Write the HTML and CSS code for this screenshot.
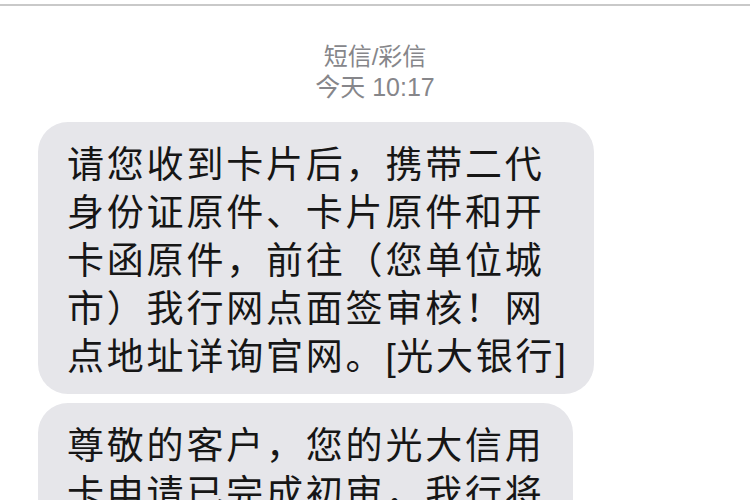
FILE: index.html
```html
<!DOCTYPE html>
<html lang="zh-CN">
<head>
<meta charset="utf-8">
<title>短信/彩信</title>
<link rel="stylesheet" href="styles.css">
</head>
<body>
<div class="topline"></div>
<div class="header">
  <div class="service">短信/彩信</div>
  <div class="time">今天 10:17</div>
</div>
<div class="thread">
  <div class="bubble">
    <span class="line">请您收到卡片后，携带二代</span>
    <span class="line">身份证原件、卡片原件和开</span>
    <span class="line">卡函原件，前往（您单位城</span>
    <span class="line">市）我行网点面签审核！网</span>
    <span class="line">点地址详询官网。<span class="latin">[</span>光大银行<span class="latin">]</span></span>
  </div>
  <div class="bubble">
    <span class="line">尊敬的客户，您的光大信用</span>
    <span class="line">卡申请已完成初审，我行将</span>
    <span class="line">尽快为您寄送卡片。</span>
  </div>
</div>
</body>
</html>
```

FILE: styles.css
```css
html, body {
  margin: 0;
  padding: 0;
  background: #ffffff;
  overflow: hidden;
}

body {
  width: 750px;
  height: 500px;
  font-family: "Liberation Sans", "Noto Sans CJK SC", sans-serif;
}

.topline {
  margin-top: 4px;
  height: 2px;
  background: #c9c9c9;
}

.header {
  padding-top: 35px;
  text-align: center;
  color: #86868a;
  font-size: 24px;
  line-height: 31px;
}

.time {
  font-size: 25px;
}

.thread {
  display: flex;
  flex-direction: column;
  align-items: flex-start;
  gap: 9px;
  padding-top: 19px;
  padding-left: 38px;
}

.bubble {
  background: #e6e6ea;
  border-radius: 30px;
  padding: 16px 28px 12px 29px;
  display: flex;
  flex-direction: column;
  color: #161616;
  font-family: "Noto Sans CJK SC", sans-serif;
  font-size: 37px;
  letter-spacing: 2.8px;
  line-height: 48px;
}

.line {
  white-space: nowrap;
}

.latin {
  font-family: "Liberation Sans", sans-serif;
  letter-spacing: 0.5px;
}
```
